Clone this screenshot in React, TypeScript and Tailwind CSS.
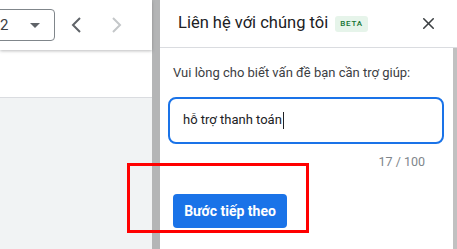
import { X } from 'lucide-react';

export default function App() {
  return (
    <div
      className="relative flex h-[249px] w-[457px] overflow-hidden bg-white text-[#202124]"
      style={{ fontFamily: 'Roboto, "Noto Sans", sans-serif' }}
    >
      {/* Left page area */}
      <div className="flex w-[152px] flex-col">
        <div className="relative z-10 flex h-[50px] items-center shadow-[0_1px_3px_rgba(60,64,67,0.35)]">
          <div className="ml-[-30px] flex h-[32px] w-[85px] items-center justify-between rounded-[4px] border border-[#80868b] pl-[29px] pr-[14px]">
            <span className="text-[15px] text-[#3c4043]">2</span>
            <svg width="10" height="5" viewBox="0 0 10 5">
              <path d="M0 0 L10 0 L5 5 Z" fill="#5f6368" />
            </svg>
          </div>
          <svg className="ml-[16px]" width="10" height="16" viewBox="0 0 10 16">
            <path d="M9 1 L2 8 L9 15" stroke="#5f6368" strokeWidth="2" fill="none" />
          </svg>
          <svg className="ml-[31px]" width="10" height="16" viewBox="0 0 10 16">
            <path d="M1 1 L8 8 L1 15" stroke="#c4c7c9" strokeWidth="2" fill="none" />
          </svg>
        </div>
        <div className="h-[48px] border-b border-[#dadce0] bg-white" />
        <div className="flex-1 bg-[#f1f3f4]" />
      </div>

      {/* Panel edge */}
      <div className="w-[8px] bg-[#b4b5b6]" />

      {/* Contact panel */}
      <div className="flex flex-1 flex-col">
        <div className="flex h-[48px] items-center border-b border-[#dadce0] pl-[18px] pr-[19px]">
          <span className="text-[16.5px] text-[#202124]">Liên hệ với chúng tôi</span>
          <span className="ml-[7px] rounded-[3px] bg-[#e6f4ea] px-[5px] py-[2px] text-[8px] font-medium tracking-[0.8px] text-[#137333]">
            BETA
          </span>
          <X className="ml-auto" size={19} strokeWidth={2} color="#3c4043" />
        </div>
        <div className="flex flex-1">
          <div className="flex flex-1 flex-col">
            <p className="mt-[15px] pl-[13px] text-[13px] text-[#3c4043]">
              Vui lòng cho biết vấn đề bạn cần trợ giúp:
            </p>
            <div className="ml-[8px] mt-[14px] flex h-[47px] w-[276px] items-center rounded-[8px] border-2 border-[#1a73e8] pl-[13px]">
              <span className="text-[13px] text-[#202124]">hỗ trợ thanh toán</span>
              <span className="ml-[1px] h-[17px] w-[1px] bg-[#202124]" />
            </div>
            <div className="mr-[28px] mt-[9px] text-right text-[12.5px] text-[#80868b]">17 / 100</div>
            <div className="ml-[13px] mt-[23px]">
              <button className="flex h-[34px] w-[114px] items-center justify-center rounded-[4px] bg-[#1a73e8] text-[14px] font-bold text-white">
                Bước tiếp theo
              </button>
            </div>
          </div>
          <div className="w-[4px] bg-[#c1c1c1]" />
        </div>
      </div>

      {/* Annotation box */}
      <div className="absolute left-[127px] top-[163px] h-[70px] w-[182px] border-[3px] border-[#ff0000]" />
    </div>
  );
}
